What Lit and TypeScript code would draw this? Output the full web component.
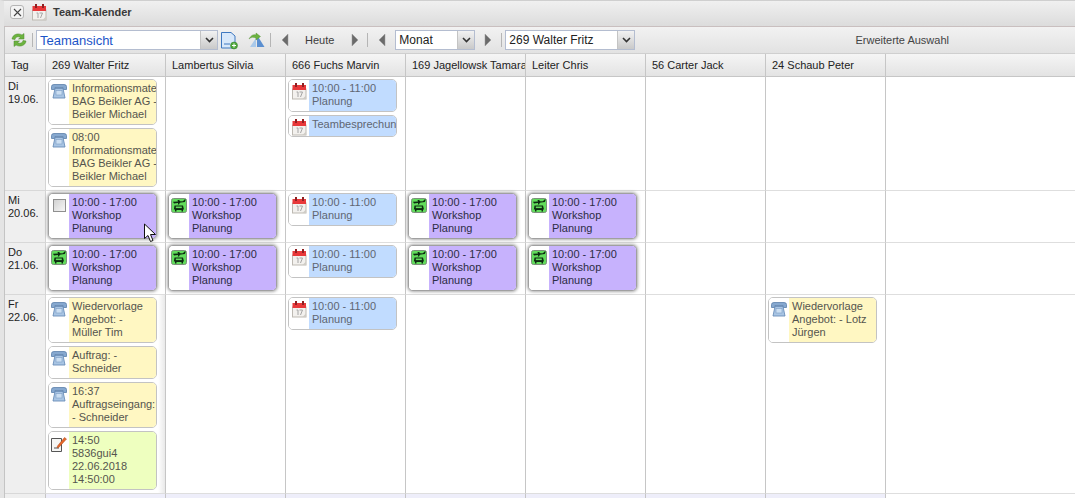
import { LitElement, html, css, svg } from "lit";
import { customElement } from "lit/decorators.js";

type Kind = "phone" | "cal" | "bus" | "check" | "note";
type Tone = "yellow" | "blue" | "purple" | "green";
interface Ev { icon: Kind; tone: Tone; lines: string[]; raised?: boolean }

const phone = svg`<svg width="16" height="15" viewBox="0 0 16 15"><path d="M.5 5.500 V2.500 Q.5 .5 3 .5 H13 Q15.500 .5 15.500 2.500 V5.500 H12 V3.500 H4 V5.500Z" fill="#86a8cf" stroke="#5c80ab" stroke-width=".8"/><path d="M4 4.500 H12 L14 14 H2Z" fill="#a9c5e4" stroke="#6a8db8" stroke-width=".9"/><rect x="5" y="6.500" width="6" height="4.500" fill="#cbdef2" stroke="#7d9dc4" stroke-width=".6"/></svg>`;
const cal = svg`<svg width="15" height="17" viewBox="0 0 15 17"><rect x=".5" y="6" width="13.500" height="10" fill="#f3f1ee" stroke="#bdb9b2"/><rect x=".5" y="2" width="13.500" height="5" fill="#e8383a"/><rect x="3" y="0" width="2" height="4" fill="#8e2022"/><rect x="10" y="0" width="2" height="4" fill="#8e2022"/><path d="M4.500 9 H6 V14 M7.500 9 H10.500 L8.500 14" fill="none" stroke="#a5a5a5" stroke-width="1"/><path d="M10.500 16 L14 12.500 V16Z" fill="#cfccc6"/></svg>`;
const bus = svg`<svg width="16" height="15" viewBox="0 0 16 15"><rect x=".5" y=".5" width="15" height="14" rx="2" fill="#62dc5c" stroke="#7b917a"/><path d="M2 3.800 L12 3.200 L13.500 1.500 H14.800 L13.800 4 L3 5.600Z" fill="#0c2a10"/><path d="M6.500 2 H8 L9.500 3.500 L8 6.500 H6.800 L7.200 4.500Z" fill="#0c2a10"/><path d="M3.500 7.500 H12 L13 11.500 H12 V13.500 H10.500 V12 H5.500 V13.500 H4 V11.500 H2.800Z" fill="#0c2a10"/><rect x="4.800" y="8.500" width="6" height="1.600" fill="#62dc5c"/></svg>`;
const check = svg`<svg width="13" height="13" viewBox="0 0 13 13"><defs><linearGradient id="cb" x1="0" y1="0" x2="1" y2="1"><stop offset="0" stop-color="#d0d0d0"/><stop offset="1" stop-color="#f8f8f8"/></linearGradient></defs><rect x=".5" y=".5" width="12" height="12" fill="url(#cb)" stroke="#8f8f8f"/></svg>`;
const note = svg`<svg width="16" height="15" viewBox="0 0 16 15"><path d="M.5 1.500 H10.500 V14.500 H.5Z" fill="#f6f6f4" stroke="#555"/><path d="M3 11 H8" stroke="#555"/><path d="M6.500 9 L13.500 .5 L15.500 2 L8 10.300 L6 10.800Z" fill="#e8682a" stroke="#a5461a" stroke-width=".5"/></svg>`;
const icons: Record<Kind, unknown> = { phone, cal, bus, check, note };

const ws = (icon: Kind = "bus"): Ev => ({ icon, tone: "purple", raised: true, lines: ["10:00 - 17:00", "Workshop", "Planung"] });
const pl = (): Ev => ({ icon: "cal", tone: "blue", lines: ["10:00 - 11:00", "Planung"] });
const y = (...lines: string[]): Ev => ({ icon: "phone", tone: "yellow", lines });

const columns = ["269 Walter Fritz", "Lambertus Silvia", "666 Fuchs Marvin", "169 Jagellowsk Tamara", "Leiter Chris", "56 Carter Jack", "24 Schaub Peter"];

const rows: { day: string; date: string; cells: Ev[][] }[] = [
  { day: "Di", date: "19.06.", cells: [
    [y("Informationsmaterial", "BAG Beikler AG -", "Beikler Michael"), y("08:00", "Informationsmaterial", "BAG Beikler AG -", "Beikler Michael")],
    [], [pl(), { icon: "cal", tone: "blue", lines: ["Teambesprechung"] }], [], [], [], [],
  ] },
  { day: "Mi", date: "20.06.", cells: [[ws("check")], [ws()], [pl()], [ws()], [ws()], [], []] },
  { day: "Do", date: "21.06.", cells: [[ws()], [ws()], [pl()], [ws()], [ws()], [], []] },
  { day: "Fr", date: "22.06.", cells: [
    [y("Wiedervorlage", "Angebot: -", "Müller Tim"), y("Auftrag: -", "Schneider"), y("16:37", "Auftragseingang:", "- Schneider"),
     { icon: "note", tone: "green", lines: ["14:50", "5836gui4", "22.06.2018", "14:50:00"] }],
    [], [pl()], [], [], [], [y("Wiedervorlage", "Angebot: - Lotz", "Jürgen")],
  ] },
];

@customElement("app-root")
export class AppRoot extends LitElement {
  static styles = css`
    :host { display: block; width: 1075px; height: 498px; overflow: hidden; background: #fff;
      font-family: "Liberation Sans", Arial, sans-serif; font-size: 11px; color: #222; position: relative; }
    .frame { height: 498px; box-sizing: border-box; border-left: 4px solid #e4e4e4; border-top: 1px solid #cfcfcf; display: flex; flex-direction: column; }
    .inner { border-left: 1px solid #c4c4c4; flex: 1; display: flex; flex-direction: column; min-height: 0; }
    .title { height: 26px; box-sizing: border-box; flex: none; display: flex; align-items: center; gap: 5px; padding: 0 0 3px 5px;
      background: linear-gradient(#f0f0f0, #dcdcdc); border-bottom: 1px solid #c9bfbf; margin-left: -1px; }
    .close { width: 14px; height: 14px; box-sizing: border-box; border: 1px solid #b5b5b5; border-radius: 3px; background: #f4f4f4; display: flex; align-items: center; justify-content: center; margin-left: 1px; margin-right: 3px; }
    .ttl { font-weight: bold; font-size: 11px; color: #3a3a3a; margin-left: 1px; }
    .toolbar { height: 27px; box-sizing: border-box; flex: none; display: flex; align-items: center; background: linear-gradient(#f2f2f2, #e2e2e2); border-bottom: 1px solid #cfcfcf; padding-left: 6px; }
    .toolbar > svg { flex: none; }
    .sep { width: 1px; height: 14px; background: #b5b5b5; flex: none; }
    .combo { height: 20px; box-sizing: border-box; border: 1px solid #b4bdd0; background: #fff; display: flex; align-items: center; font-size: 12px; padding-left: 3px; flex: none; color: #222; }
    .combo span { flex: 1; white-space: nowrap; }
    .combo.main { color: #1c55c8; font-size: 13px; }
    .arrow { width: 16px; align-self: stretch; flex: none; background: linear-gradient(#f2f2f2, #c9c9c9); border-left: 1px solid #c4c4c4; display: flex; align-items: center; justify-content: center; }
    .tri { flex: none; display: block; }
    .btn-text { font-size: 11px; color: #3c3c3c; }
    .adv { margin-left: auto; margin-right: 126px; color: #444; font-size: 11px; }
    .grid { display: grid; grid-template-columns: 41px repeat(7, 120px) 1fr; flex: none; }
    .hd { height: 23px; box-sizing: border-box; background: linear-gradient(#f5f5f5, #e3e3e3); border-right: 1px solid #c6c6c6; border-bottom: 1px solid #c6c6c6;
      display: flex; align-items: center; padding-left: 6px; white-space: nowrap; overflow: hidden; color: #222; font-size: 11px; }
    .hd.last { border-right: 0; }
    .day { background: #efefef; border-right: 1px solid #d4d4d4; border-bottom: 1px solid #d8d8d8; padding: 3px 0 0 3px; line-height: 13px; color: #222; }
    .cell { border-right: 1px solid #c6c6c6; border-bottom: 1px solid #dedede; padding: 2px 0 0 2px; display: flex; flex-direction: column; align-items: flex-start; min-width: 0; }
    .cell.tail { border-right: 0; }
    .cell.edge { background: linear-gradient(90deg, #fff 112px, #e9e9e9 119px); }
    .card { width: 109px; box-sizing: border-box; margin-bottom: 3px; display: flex; border: 1px solid #c3c3c3; border-radius: 5px; overflow: hidden; background: #fff; flex: none; }
    .card.raised { border-color: #a0a0a0; box-shadow: 0 0 3px 1px rgba(90,90,90,.5); }
    .ico { width: 20px; flex: none; box-sizing: border-box; background: #fff; }
    .ico svg { display: block; }
    .ico.phone { padding: 4px 0 0 2px; }
    .ico.cal { padding: 3px 0 0 3px; }
    .ico.bus { padding: 4px 0 0 2px; }
    .ico.check { padding: 5px 0 0 4px; }
    .ico.note { padding: 5px 0 0 2px; }
    .txt { flex: 1; min-width: 0; overflow: hidden; white-space: nowrap; padding: 2px 0 3px 3px; line-height: 13px; color: #55554e; }
    .yellow { background: #fff7c2; }
    .blue { background: #c1dcff; color: #5f6672; }
    .purple { background: #c7b2fd; color: #2c2c44; }
    .green { background: #eeffbf; }
    .foot { flex: 1; display: grid; grid-template-columns: 41px repeat(7, 120px) 1fr; min-height: 0; }
    .foot div { background: #eeeefa; border-right: 1px solid #c6c6c6; }
    .foot div:first-child { background: #efefef; }
    .foot div:last-child { background: #fff; border-right: 0; }
    .cursor { position: absolute; left: 143px; top: 223px; }
  `;

  private tri(dir: "l" | "r", ml: number) {
    const d = dir === "l" ? "M7 1 V13 L1 7Z" : "M1 1 V13 L7 7Z";
    return html`<svg class="tri" style="margin-left:${ml}px" width="8" height="14" viewBox="0 0 8 14"><path d=${d} fill="#6b6b6b" stroke="#9a9a9a" stroke-width=".5"/></svg>`;
  }

  private combo(text: string, width: number, main = false, ml = 0) {
    return html`<div class="combo ${main ? "main" : ""}" style="width:${width}px;margin-left:${ml}px"><span>${text}</span>
      <div class="arrow"><svg width="9" height="6" viewBox="0 0 9 6"><path d="M1 1 L4.500 4.500 L8 1" fill="none" stroke="#333" stroke-width="1.600"/></svg></div></div>`;
  }

  private card(e: Ev) {
    return html`<div class="card ${e.raised ? "raised" : ""}">
      <div class="ico ${e.icon}">${icons[e.icon]}</div>
      <div class="txt ${e.tone}">${e.lines.map((l) => html`<div>${l}</div>`)}</div>
    </div>`;
  }

  render() {
    return html`<div class="frame"><div class="inner">
      <div class="title">
        <div class="close"><svg width="9" height="9" viewBox="0 0 9 9"><path d="M1 1 L8 8 M8 1 L1 8" stroke="#444" stroke-width="1.100"/></svg></div>
        ${cal}
        <span class="ttl">Team-Kalender</span>
      </div>
      <div class="toolbar">
        <svg width="16" height="16" viewBox="0 0 16 16"><path d="M1 7 C1.500 2.500 7 .5 11 3 L13 1.500 V7 H7.500 L9.500 5.500 C7 4 4.500 5 4 7.500Z" fill="#6cb33f" stroke="#4d8a2c" stroke-width=".5"/><path d="M15 9 C14.500 13.500 9 15.500 5 13 L3 14.500 V9 H8.500 L6.500 10.500 C9 12 11.500 11 12 8.500Z" fill="#6cb33f" stroke="#4d8a2c" stroke-width=".5"/></svg>
        <div class="sep" style="margin-left:5px"></div>
        ${this.combo("Teamansicht", 182, true, 3)}
        <svg style="margin-left:1px" width="20" height="19" viewBox="0 0 20 19"><path d="M2.500 1.500 H12 L16 5 V17 H2.500Z" fill="#d8e8fa" stroke="#3f78c0"/><path d="M5 13 H11" stroke="#3f78c0"/><circle cx="15" cy="14.500" r="3.500" fill="#4fa83c" stroke="#2f7a24" stroke-width=".5"/><path d="M13 14.500 H17 M15 12.500 V16.500" stroke="#fff"/></svg>
        <svg style="margin-left:9px" width="17" height="16" viewBox="0 0 17 16"><path d="M9 3 L16.500 15 H9Z" fill="#5b8fd0"/><path d="M8 6 L8 15 H2Z" fill="#a9c9ea"/><path d="M1 7 C3 3 6 2 8 3 L8 1 L12.500 4.500 L8 8 L8 6 C6 5 3 5 1 7Z" fill="#6cb33f" stroke="#4d8a2c" stroke-width=".4"/></svg>
        <div class="sep" style="margin-left:5px"></div>
        ${this.tri("l", 10)}
        <span class="btn-text" style="margin-left:16px">Heute</span>
        ${this.tri("r", 17)}
        <div class="sep" style="margin-left:8px"></div>
        ${this.tri("l", 10)}
        ${this.combo("Monat", 80, false, 9)}
        ${this.tri("r", 9)}
        <div class="sep" style="margin-left:9px"></div>
        ${this.combo("269 Walter Fritz", 130, false, 3)}
        <span class="adv">Erweiterte Auswahl</span>
      </div>
      <div class="grid">
        <div class="hd">Tag</div>
        ${columns.map((c) => html`<div class="hd">${c}</div>`)}
        <div class="hd last"></div>
        ${rows.map((r, ri) => html`
          <div class="day"><div>${r.day}</div><div>${r.date}</div></div>
          ${r.cells.map((c, ci) => html`<div class="cell ${ri === 3 && ci === 0 ? "edge" : ""}">${c.map((e) => this.card(e))}</div>`)}
          <div class="cell tail"></div>
        `)}
      </div>
      <div class="foot">${Array.from({ length: 9 }, () => html`<div></div>`)}</div>
    </div></div>
    <svg class="cursor" width="15" height="20" viewBox="0 0 15 20"><path d="M1.500 1 V15.500 L5 12.500 L7.500 18.500 L10 17.500 L7.500 11.500 L12.500 11.500 Z" fill="#fff" stroke="#111" stroke-width="1"/></svg>`;
  }
}
